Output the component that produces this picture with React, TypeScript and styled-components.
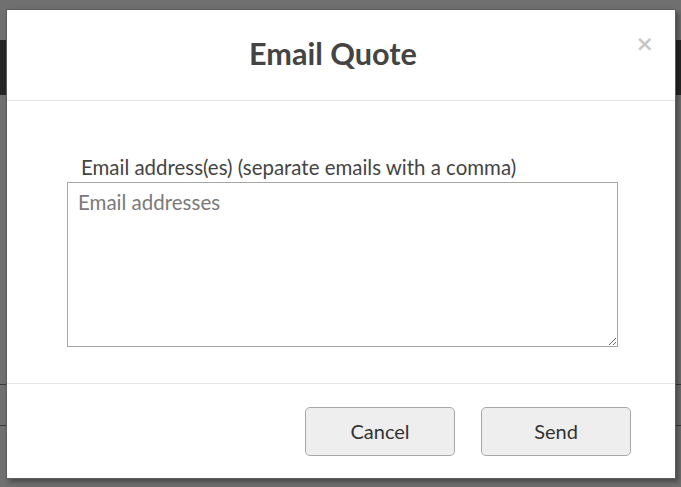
import React from "react";
import styled, { createGlobalStyle } from "styled-components";

const Global = createGlobalStyle`
  html, body { margin: 0; padding: 0; }
  body {
    width: 681px;
    height: 487px;
    overflow: hidden;
    background: #707070;
    font-family: Lato, "Open Sans", sans-serif;
  }
`;

const Page = styled.div`
  position: relative;
  width: 681px;
  height: 487px;
  padding-top: 40px;
  box-sizing: border-box;
`;

const PageHeader = styled.div`
  height: 55px;
  background: #262626;
`;

const PageRule = styled.div<{ $top: number }>`
  height: 1px;
  background: #3a3a3a;
  margin-top: ${(p) => p.$top}px;
`;

const Modal = styled.div`
  position: absolute;
  left: 6px;
  top: 9px;
  width: 670px;
  height: 470px;
  box-sizing: border-box;
  background: #fff;
  border: 1px solid #5c5c5c;
  box-shadow: 3px 3px 5px rgba(0, 0, 0, 0.35);
  display: flex;
  flex-direction: column;
`;

const Header = styled.div`
  position: relative;
  height: 90px;
  border-bottom: 1px solid #e5e5e5;
  display: flex;
  align-items: center;
  justify-content: center;
  padding-right: 16px;
`;

const Title = styled.h2`
  margin: 0;
  font-size: 30.6px;
  font-weight: 700;
  color: #444;
  padding-bottom: 3px;
`;

const Close = styled.button`
  position: absolute;
  right: 21px;
  top: 23px;
  border: none;
  background: none;
  padding: 0;
  font-family: "DejaVu Sans", sans-serif;
  font-size: 22px;
  font-weight: 700;
  color: #c8c8c8;
  line-height: 1;
  cursor: pointer;
`;

const Body = styled.div`
  height: 283px;
  border-bottom: 1px solid #e5e5e5;
  padding: 54px 0 0 60px;
  box-sizing: border-box;
  display: flex;
  flex-direction: column;
`;

const Label = styled.label`
  font-size: 20.45px;
  color: #444;
  padding-left: 14px;
  line-height: 24px;
`;

const TextArea = styled.textarea`
  margin-top: 3px;
  width: 551px;
  height: 165px;
  box-sizing: border-box;
  border: 1px solid #a6a6a6;
  border-radius: 0;
  padding: 7px 10px;
  font-family: Lato, "Open Sans", sans-serif;
  font-size: 20.5px;
  color: #333;
  outline: none;
  resize: both;
  &::placeholder {
    color: #7a7a7a;
  }
`;

const Footer = styled.div`
  flex: 1;
  display: flex;
  justify-content: flex-end;
  align-items: flex-start;
  gap: 26px;
  padding: 23px 44px 0 0;
`;

const Button = styled.button`
  width: 150px;
  height: 49px;
  box-sizing: border-box;
  background: #eeeeee;
  border: 1px solid #a9a9a9;
  border-radius: 5px;
  padding: 0 0 2px;
  font-family: Lato, "Open Sans", sans-serif;
  font-size: 20px;
  color: #333;
  cursor: pointer;
`;

export default function App() {
  return (
    <>
      <Global />
      <Page>
        <PageHeader />
        <PageRule $top={289} />
        <PageRule $top={40} />
        <Modal>
          <Header>
            <Title>Email Quote</Title>
            <Close aria-label="Close">×</Close>
          </Header>
          <Body>
            <Label htmlFor="emails">Email address(es) (separate emails with a comma)</Label>
            <TextArea id="emails" placeholder="Email addresses" autoFocus />
          </Body>
          <Footer>
            <Button>Cancel</Button>
            <Button>Send</Button>
          </Footer>
        </Modal>
      </Page>
    </>
  );
}
